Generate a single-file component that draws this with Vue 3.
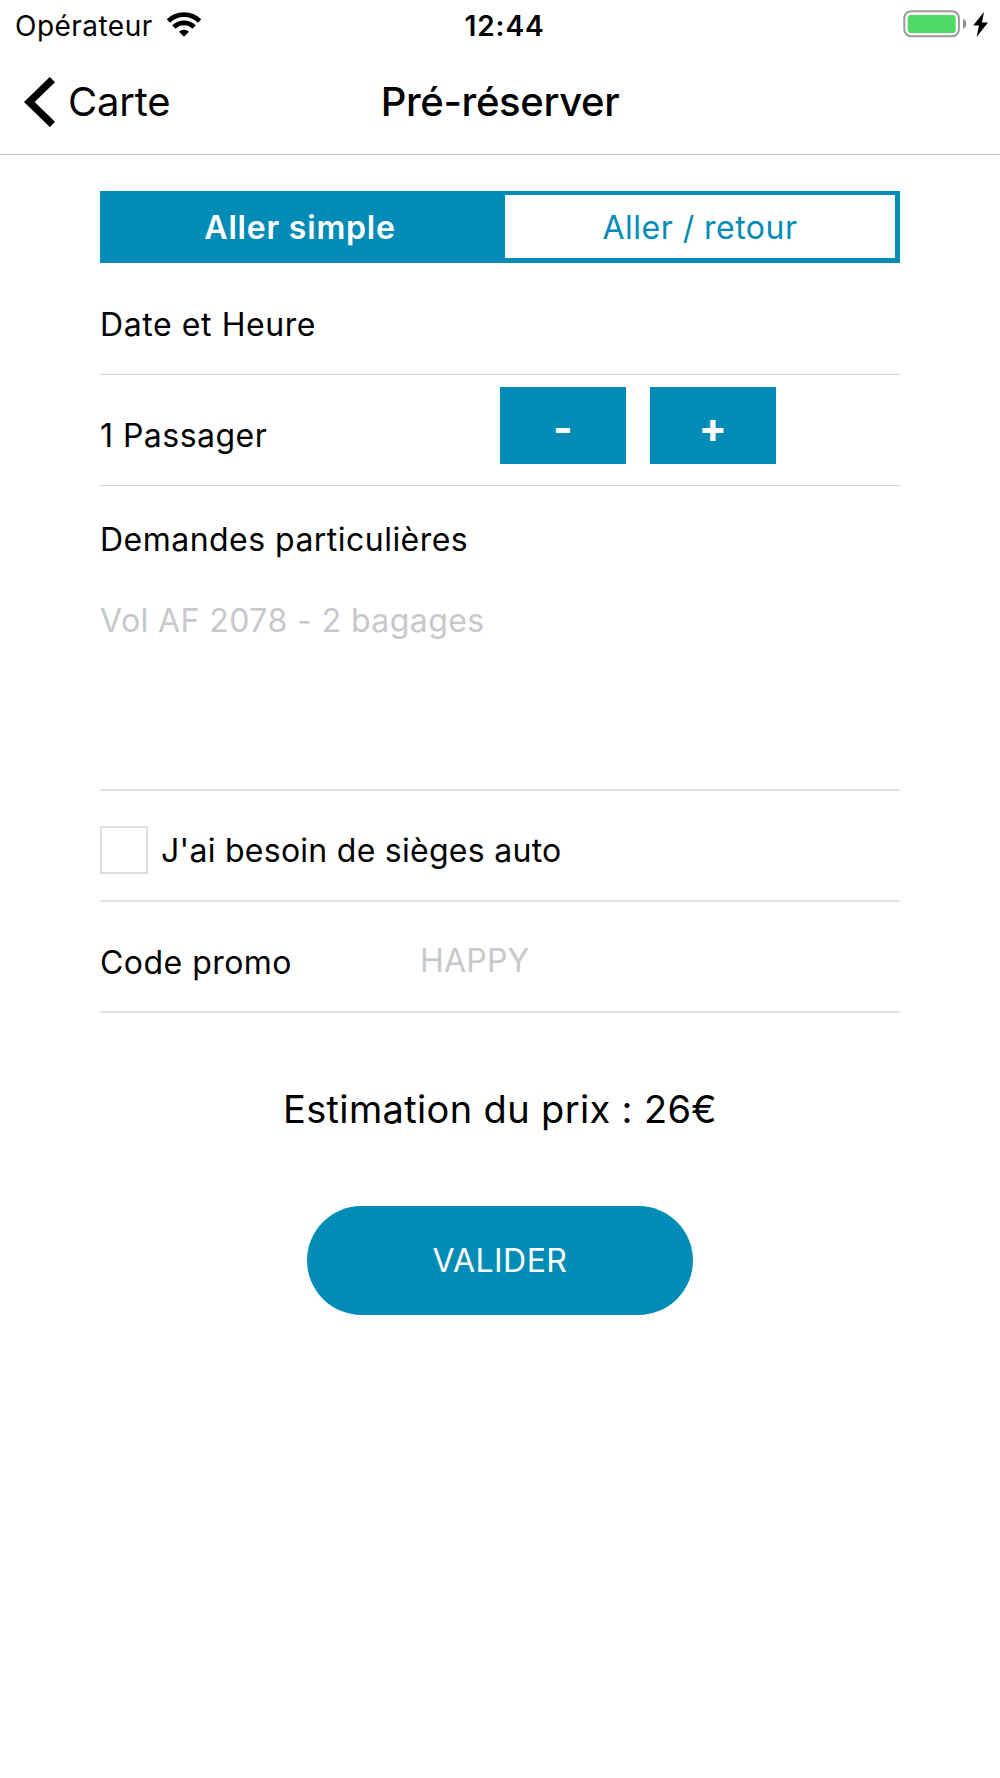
<script setup>
import { ref, computed } from 'vue';

const trip = ref('oneway');
const passengers = ref(1);
const requests = ref('');
const promo = ref('');
const carSeat = ref(false);

const passengerLabel = computed(() => `${passengers.value} Passager${passengers.value > 1 ? 's' : ''}`);

function removePassenger() {
  if (passengers.value > 1) passengers.value--;
}
</script>

<template>
  <div class="screen">
    <div class="status-bar">
      <div class="carrier">
        <span class="carrier-name">Opérateur</span>
        <svg class="wifi" width="36" height="26" viewBox="0 0 36 26">
          <path d="M2.4 8.9 A22.5 22.5 0 0 1 33.6 8.9" />
          <path d="M7.9 14.9 A14.6 14.6 0 0 1 28.1 14.9" />
          <path class="dot" d="M18 24.8 L12.9 19.7 A7.4 7.4 0 0 1 23.1 19.7 Z" />
        </svg>
      </div>
      <div class="clock">12:44</div>
      <div class="power">
        <svg width="86" height="28" viewBox="0 0 86 28">
          <rect class="shell" x="1.3" y="1.3" width="54.6" height="25" rx="6.8" />
          <rect class="charge" x="4.7" y="5" width="48" height="18" rx="3" />
          <path class="cap" d="M60 9 Q63.3 10.2 63.3 13.8 Q63.3 17.4 60 19 Z" />
          <path d="M81 2 L70.2 15.6 L76 15.6 L73.6 27 L85 12.6 L79 12.6 Z" />
        </svg>
      </div>
    </div>

    <div class="nav-bar">
      <button class="back">
        <svg width="32" height="50" viewBox="0 0 32 50">
          <path d="M28.4 2.6 L5.2 25 L28.4 47.4" />
        </svg>
        <span class="back-label">Carte</span>
      </button>
      <h1>Pré-réserver</h1>
      <div></div>
    </div>

    <div class="form">
      <div class="segment">
        <button class="one-way" :class="{ active: trip === 'oneway' }" @click="trip = 'oneway'">Aller simple</button>
        <button :class="{ active: trip === 'return' }" @click="trip = 'return'">Aller / retour</button>
      </div>

      <div class="row">
        <span class="label date">Date et Heure</span>
      </div>

      <div class="row">
        <span class="label">{{ passengerLabel }}</span>
        <div class="stepper">
          <button @click="removePassenger">-</button>
          <button @click="passengers++">+</button>
        </div>
      </div>

      <div class="requests">
        <label for="requests">Demandes particulières</label>
        <textarea id="requests" v-model="requests" placeholder="Vol AF 2078 - 2 bagages"></textarea>
      </div>

      <label class="row soft seat">
        <input v-model="carSeat" type="checkbox" />
        <span class="seat-label">J'ai besoin de sièges auto</span>
      </label>

      <div class="row soft">
        <label class="promo-label" for="promo">Code promo</label>
        <input id="promo" v-model="promo" class="promo" placeholder="HAPPY" />
      </div>

      <div class="price">Estimation du prix : 26€</div>
      <button class="submit">VALIDER</button>
    </div>
  </div>
</template>

<style>
body {
  margin: 0;
  background: #fff;
}
</style>

<style scoped>
.screen {
  min-height: 1778px;
  background: #fff;
  color: #000;
  font-family: Inter, "Liberation Sans", sans-serif;
  font-size: 32px;
  line-height: 40px;
  letter-spacing: 0.47px;
}

button, input, textarea {
  font: inherit;
  letter-spacing: inherit;
  border: none;
  padding: 0;
  margin: 0;
  background: none;
  border-radius: 0;
  outline: none;
}

/* status bar */
.status-bar {
  display: grid;
  grid-template-columns: 1fr auto 1fr;
  align-items: center;
  height: 51px;
  padding: 0 11px 0 15px;
  font-size: 28px;
}

.carrier {
  display: flex;
  align-items: center;
  gap: 13px;
}

.wifi {
  margin-top: -2px;
  fill: none;
  stroke: #000;
  stroke-width: 4.8;
}

.wifi .dot { fill: #000; stroke: none; }

.clock {
  padding-left: 5px;
  font-weight: 600;
  letter-spacing: 0.9px;
}

.power {
  display: flex;
  justify-content: flex-end;
  margin-top: -3px;
}

.shell { fill: #fff; stroke: #999; stroke-width: 2; }
.charge { fill: #4cd964; }
.cap { fill: #8e8e8e; }

/* navigation */
.nav-bar {
  display: grid;
  grid-template-columns: 1fr auto 1fr;
  align-items: center;
  height: 101px;
  padding: 0 24px 2px;
  border-bottom: 1px solid #c3c3c3;
  font-size: 40px;
}

.back {
  display: flex;
  align-items: center;
  gap: 12px;
  letter-spacing: -0.2px;
}

.back path {
  fill: none;
  stroke: #000;
  stroke-width: 7.4;
}

h1 {
  margin: 0;
  font-size: 40px;
  font-weight: 500;
  letter-spacing: -0.35px;
}

/* form */
.form {
  display: flex;
  flex-direction: column;
  padding: 36px 100px 0;
}

.segment {
  display: grid;
  grid-template-columns: 401px 1fr;
  height: 63px;
  margin-bottom: 1px;
  border: solid #008cb6;
  border-width: 4px 5px 5px 4px;
}

.segment button {
  padding-top: 3px;
  color: #008cb6;
}

.segment .one-way { padding-right: 9px; }

.segment button.active {
  background: #008cb6;
  color: #fff;
  font-weight: 600;
  letter-spacing: 0.8px;
}

.row {
  display: flex;
  align-items: center;
  height: 100px;
  padding-top: 10px;
  border-bottom: 1px solid #ccd3dc;
}

.row.soft {
  padding-top: 9px;
  border-bottom: 2px solid #dfe2e7;
}

.label {
  width: 400px;
  padding-top: 2px;
}

.date { letter-spacing: 0.58px; }

.stepper {
  display: flex;
  gap: 24px;
  margin-top: -20px;
}

.stepper button {
  width: 126px;
  height: 77px;
  padding-top: 5px;
  background: #008cb6;
  color: #fff;
  font-size: 42px;
  font-weight: 700;
}

.requests {
  display: flex;
  flex-direction: column;
  height: 269px;
  padding-top: 34px;
  border-bottom: 2px solid #dfe2e7;
}

textarea {
  height: 150px;
  margin-top: 41px;
  resize: none;
  letter-spacing: 0.43px;
}

::placeholder {
  color: #c7c7cc;
  opacity: 1;
}

.seat input {
  appearance: none;
  box-sizing: border-box;
  width: 48px;
  height: 48px;
  margin-right: 13px;
  border: 2px solid #dadfe4;
}

.seat input:checked { background: #008cb6; }

.seat-label {
  padding-top: 1px;
  letter-spacing: 0.27px;
}

.promo-label {
  width: 320px;
  padding-top: 3px;
}

.promo {
  width: 400px;
  height: 44px;
  margin-top: -2px;
  letter-spacing: 0.2px;
}

.price {
  margin-top: 76px;
  text-align: center;
  font-size: 38px;
  letter-spacing: 0.35px;
}

.submit {
  align-self: center;
  width: 386px;
  height: 109px;
  margin-top: 77px;
  border-radius: 55px;
  background: #008cb6;
  color: #fff;
}
</style>
